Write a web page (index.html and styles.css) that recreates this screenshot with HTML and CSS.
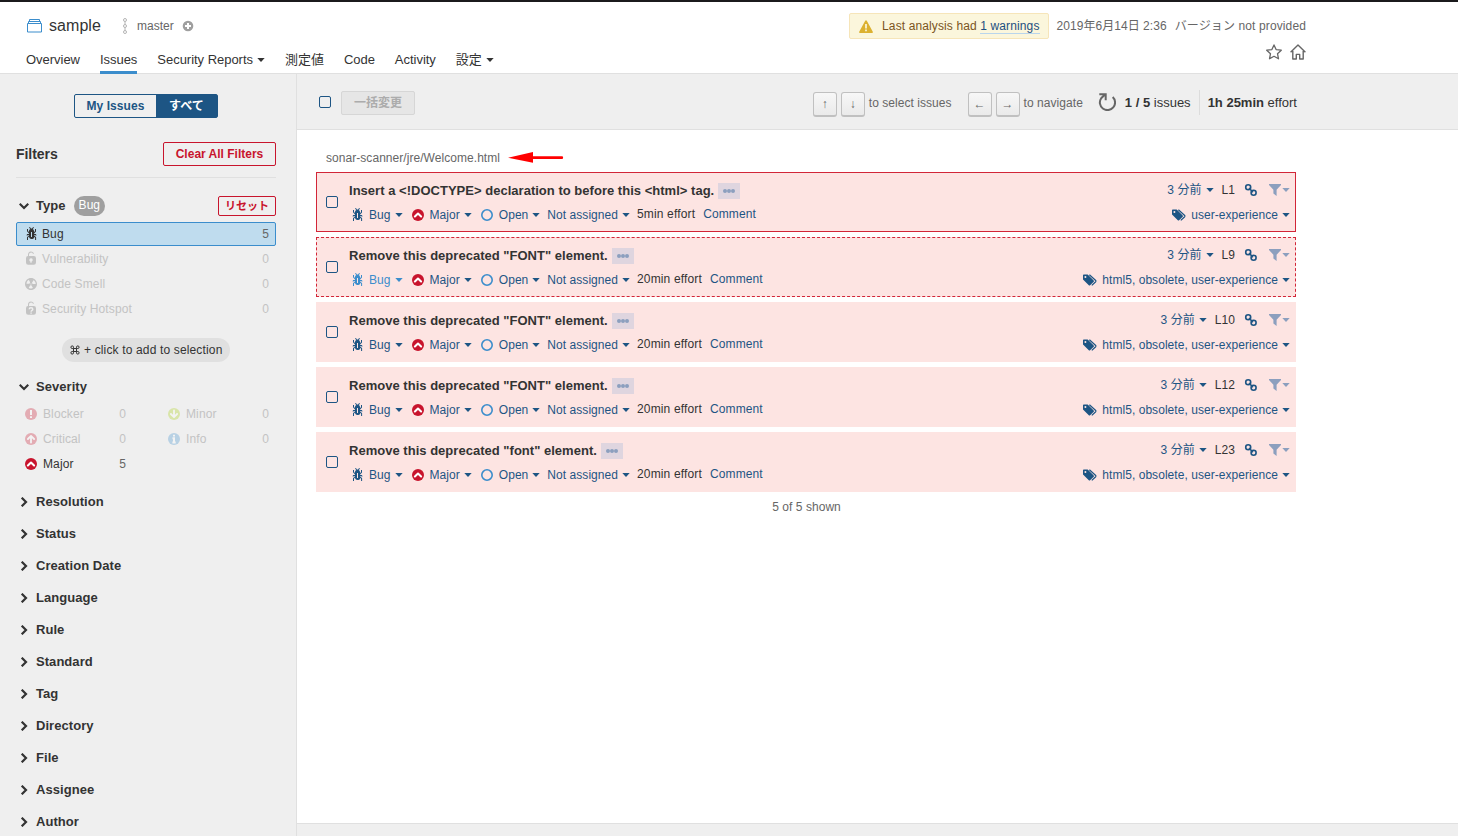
FILE: index.html
```
<!DOCTYPE html>
<html lang="ja">
<head>
	<meta charset="UTF-8">
	<title>sample - Issues</title>
	<link rel="stylesheet" href="styles.css">
</head>
<body>
	<!-- icons -->
	<svg class="sprite">
		<symbol id="bug" viewBox="0 0 16 16"><path fill="currentColor" d="M11 9h1.3l.5.8.8-.5-.8-1.3H11v-.3l2-2.3V3h-1v2l-1 1.2V5c-.1-.8-.7-1.5-1.4-1.9L11 1.8l-.7-.7-1.8 1.6-1.8-1.6-.7.7 1.5 1.3C6.7 3.5 6.1 4.2 6 5v1.1L5 5V3H4v2.3l2 2.3V8H4.2l-.7 1.2.8.5.4-.7H6v.3l-2 1.9V14h1v-2.4l1-1C6 12 7.1 13 8.4 13h.8c.7 0 1.4-.3 1.8-.9.3-.4.3-.9.2-1.4l.9.9V14h1v-2.8l-2-1.9V9zm-2 2H8V6h1v5z"/></symbol>
		<symbol id="lock" viewBox="0 0 16 16"><path fill="currentColor" d="M10.8 5H6V3.9a2.28 2.28 0 0 1 2-2.5 2.22 2.22 0 0 1 1.8 1.2.48.48 0 0 0 .7.2.48.48 0 0 0 .2-.7A3 3 0 0 0 8 .4a3.34 3.34 0 0 0-3 3.5v1.2a2.16 2.16 0 0 0-2 2.1v4.4a2.22 2.22 0 0 0 2.2 2.2h5.6a2.22 2.22 0 0 0 2.2-2.2V7.2A2.22 2.22 0 0 0 10.8 5zm-2.2 5.5v1.2H7.4v-1.2a1.66 1.66 0 0 1-1.1-1.6A1.75 1.75 0 0 1 8 7.2a1.71 1.71 0 0 1 .6 3.3z"/></symbol>
		<symbol id="hotspot" viewBox="0 0 16 16"><path fill="currentColor" d="M10.8 5H6V3.9a2.28 2.28 0 0 1 2-2.5 2.22 2.22 0 0 1 1.8 1.2.48.48 0 0 0 .7.2.48.48 0 0 0 .2-.7A3 3 0 0 0 8 .4a3.34 3.34 0 0 0-3 3.5v1.2a2.16 2.16 0 0 0-2 2.1v4.4a2.22 2.22 0 0 0 2.2 2.2h5.6a2.22 2.22 0 0 0 2.2-2.2V7.2A2.22 2.22 0 0 0 10.8 5z"/><path fill="none" stroke="#efefef" stroke-width="1.4" d="M6.2 8.2c0-2 3.6-2 3.6 0 0 1.2-1.7 1.1-1.7 2.5M8.1 11.5v1.3"/></symbol>
		<symbol id="smell" viewBox="0 0 16 16"><path fill="currentColor" d="M8 2C4.7 2 2 4.7 2 8s2.7 6 6 6 6-2.7 6-6-2.7-6-6-6zm-.5 5.5h.9v.9h-.9v-.9zm-3.8.2c-.1 0-.2-.1-.2-.2 0-.4.1-1.2.6-2S5.3 4.2 5.6 4c.2 0 .3 0 .3.1l1.3 2.3c0 .1 0 .2-.1.2-.1.2-.2.3-.3.5-.1.2-.2.4-.2.5 0 .1-.1.2-.2.2l-2.7-.1zM9.9 12c-.3.2-1.1.5-2 .5-.9 0-1.7-.3-2-.5-.1 0-.1-.2-.1-.3l1.3-2.3c0-.1.1-.1.2-.1.2.1.3.1.5.1s.4 0 .5-.1c.1 0 .2 0 .2.1l1.3 2.3c.2.2.2.3.1.3zm2.5-4.1L9.7 8c-.1 0-.2-.1-.2-.2 0-.2-.1-.4-.2-.5 0-.1-.2-.3-.3-.4-.1 0-.1-.1 0-.2l1.3-2.3c.1-.1.2-.1.3-.1.3.2 1 .7 1.5 1.5s.6 1.6.6 2c0 0-.1.1-.3.1z"/></symbol>
		<symbol id="major" viewBox="0 0 16 16"><circle cx="8" cy="8" r="6" fill="#c8142d"/><path fill="none" stroke="#fff" stroke-width="2.1" stroke-linecap="round" stroke-linejoin="round" d="M4.9 9.5L8 6.6l3.1 2.9"/></symbol>
		<symbol id="blocker" viewBox="0 0 16 16"><circle cx="8" cy="8" r="6" fill="#c8142d"/><path fill="none" stroke="#fff" stroke-width="2" d="M8 4v5M8 10.2v1.9"/></symbol>
		<symbol id="critical" viewBox="0 0 16 16"><circle cx="8" cy="8" r="6" fill="#c8142d"/><path fill="none" stroke="#fff" stroke-width="1.8" stroke-linecap="round" stroke-linejoin="round" d="M4.9 8L8 4.9 11.1 8M8 5.5v6"/></symbol>
		<symbol id="minor" viewBox="0 0 16 16"><circle cx="8" cy="8" r="6" fill="#a8d00c"/><path fill="none" stroke="#fff" stroke-width="1.8" stroke-linecap="round" stroke-linejoin="round" d="M4.9 8L8 11.1 11.1 8M8 10.5v-6"/></symbol>
		<symbol id="info" viewBox="0 0 16 16"><circle cx="8" cy="8" r="6" fill="#3b8dcc"/><path fill="none" stroke="#fff" stroke-width="2" d="M8 3.8v1.8M6.5 7.2H8v4.3M6.4 11.5h3.3"/></symbol>
		<symbol id="open" viewBox="0 0 16 16"><circle cx="8" cy="8" r="5.2" fill="none" stroke="#3b8dcc" stroke-width="1.6"/></symbol>
		<symbol id="caret" viewBox="0 0 8 4"><path fill="currentColor" d="M.3 0h7.4L4 4z"/></symbol>
		<symbol id="down" viewBox="0 0 10 10"><path fill="none" stroke="#333" stroke-width="2.2" d="M.7 2.7L5 7l4.3-4.3"/></symbol>
		<symbol id="right" viewBox="0 0 10 10"><path fill="none" stroke="#333" stroke-width="2.2" d="M2.7.7L7 5 2.7 9.3"/></symbol>
		<symbol id="link" viewBox="0 0 16 16"><g fill="none" stroke="currentColor" stroke-width="1.6"><circle cx="5.2" cy="5.2" r="2.5"/><circle cx="10.6" cy="10.8" r="2.5"/><path d="M6 6l4 4.200"/></g></symbol>
		<symbol id="filter" viewBox="0 0 12 12"><path fill="currentColor" d="M0 0h12v1L7.6 5.8V12L4.4 9.6V5.8L0 1z"/></symbol>
		<symbol id="tags" viewBox="0 0 16 12"><path fill="currentColor" fill-rule="evenodd" d="M1 1.5v4L6.8 11.3c.4.4.9.4 1.3 0l3.6-3.6c.4-.4.4-.9 0-1.3L6.2.9C5.900.6 5.5.5 5.1.5H2c-.6 0-1 .4-1 1zM3.4 2a1 1 0 1 1 0 2 1 1 0 0 1 0-2z"/><path fill="none" stroke="currentColor" stroke-width="1.2" d="M7.4.8l6.3 5.7c.4.4.4.8 0 1.2l-3.9 3.7"/></symbol>
	</svg>

	<header class="header">
		<div class="header-left">
			<div class="project">
				<svg class="project-icon" viewBox="0 0 15 14"><path fill="none" stroke="#3b8dcc" d="M.5 4.5h14v8.500H.5zM1.500 4.500v-2h12v2M2.500 2.500v-2h10v2"/></svg>
				<span class="project-name">sample</span>
				<svg class="branch-icon" viewBox="0 0 6 16"><g fill="none" stroke="#b4b4b4"><circle cx="3" cy="2" r="1.5"/><circle cx="3" cy="8" r="1.5"/><circle cx="3" cy="14" r="1.5"/><path d="M3 3.5v3M3 9.5v3"/></g></svg>
				<span class="branch">master</span>
				<svg class="plus-icon" viewBox="0 0 12 12"><circle cx="6" cy="6" r="5.3" fill="#9f9f9f"/><path stroke="#fff" stroke-width="2" d="M3 6h6M6 3v6"/></svg>
			</div>
			<nav class="nav">
				<a>Overview</a>
				<a class="active">Issues</a>
				<a>Security Reports<svg class="caret"><use href="#caret"/></svg></a>
				<a>測定値</a>
				<a>Code</a>
				<a>Activity</a>
				<a>設定<svg class="caret"><use href="#caret"/></svg></a>
			</nav>
		</div>
		<div class="header-right">
			<div class="analysis">
				<div class="warning">
					<svg class="warning-icon" viewBox="0 0 14 13"><path fill="#dcb130" d="M7 .2c.3 0 .6.2.8.5l6 11c.3.6 0 1.2-.8 1.2H1c-.8 0-1.1-.6-.8-1.2l6-11c.2-.3.5-.5.8-.5z"/><path stroke="#fbf6dc" stroke-width="1.7" d="M7 4v4.5M7 9.5v1.8"/></svg>
					<span>Last analysis had <a>1 warnings</a></span>
				</div>
				<span class="date">2019年6月14日 2:36</span>
				<span>バージョン not provided</span>
			</div>
			<div class="header-actions">
				<svg viewBox="0 0 16 16"><path fill="none" stroke="#666" stroke-width="1.3" stroke-linejoin="round" d="M8 .9l2.1 4.7 5.2.6-3.8 3.5 1 5.1L8 12.3l-4.5 2.5 1-5.1L.7 6.2l5.2-.6z"/></svg>
				<svg viewBox="0 0 16 16"><path fill="none" stroke="#666" stroke-width="1.4" stroke-linejoin="round" d="M.6 8.3L8 1.1l7.4 7.2M2.8 7v8h3.500v-4.600h3.400V15h3.500V7"/></svg>
			</div>
		</div>
	</header>

	<div class="page">
		<aside class="side">
			<div class="toggle"><span>My Issues</span><span class="on">すべて</span></div>
			<div class="filters-head">
				<h2>Filters</h2>
				<button class="clear">Clear All Filters</button>
			</div>

			<div class="facet-head type-head">
				<svg class="chevron"><use href="#down"/></svg>Type<span class="badge">Bug</span>
				<button class="reset">リセット</button>
			</div>
			<div class="facet-item selected"><svg class="icon"><use href="#bug"/></svg>Bug<span class="count">5</span></div>
			<div class="facet-item off"><svg class="icon"><use href="#lock"/></svg>Vulnerability<span class="count">0</span></div>
			<div class="facet-item off"><svg class="icon"><use href="#smell"/></svg>Code Smell<span class="count">0</span></div>
			<div class="facet-item off"><svg class="icon"><use href="#hotspot"/></svg>Security Hotspot<span class="count">0</span></div>
			<div class="hint"><svg class="cmd" viewBox="0 0 10 10"><path fill="none" stroke="#333" d="M3.5 3.5h3v3h-3zM3.5 3.5H2.2A1.3 1.3 0 1 1 3.5 2.2zM6.5 3.5V2.2A1.3 1.3 0 1 1 7.8 3.5zM6.5 6.5h1.3A1.3 1.3 0 1 1 6.5 7.8zM3.5 6.5v1.3A1.3 1.3 0 1 1 2.2 6.5z"/></svg>+ click to add to selection</div>

			<div class="facet-head severity-head"><svg class="chevron"><use href="#down"/></svg>Severity</div>
			<div class="severity">
				<div class="facet-item off"><svg class="icon"><use href="#blocker"/></svg>Blocker<span class="count">0</span></div>
				<div class="facet-item off"><svg class="icon"><use href="#minor"/></svg>Minor<span class="count">0</span></div>
				<div class="facet-item off"><svg class="icon"><use href="#critical"/></svg>Critical<span class="count">0</span></div>
				<div class="facet-item off"><svg class="icon"><use href="#info"/></svg>Info<span class="count">0</span></div>
				<div class="facet-item"><svg class="icon"><use href="#major"/></svg>Major<span class="count">5</span></div>
			</div>

			<div class="facet-head"><svg class="chevron"><use href="#right"/></svg>Resolution</div>
			<div class="facet-head"><svg class="chevron"><use href="#right"/></svg>Status</div>
			<div class="facet-head"><svg class="chevron"><use href="#right"/></svg>Creation Date</div>
			<div class="facet-head"><svg class="chevron"><use href="#right"/></svg>Language</div>
			<div class="facet-head"><svg class="chevron"><use href="#right"/></svg>Rule</div>
			<div class="facet-head"><svg class="chevron"><use href="#right"/></svg>Standard</div>
			<div class="facet-head"><svg class="chevron"><use href="#right"/></svg>Tag</div>
			<div class="facet-head"><svg class="chevron"><use href="#right"/></svg>Directory</div>
			<div class="facet-head"><svg class="chevron"><use href="#right"/></svg>File</div>
			<div class="facet-head"><svg class="chevron"><use href="#right"/></svg>Assignee</div>
			<div class="facet-head"><svg class="chevron"><use href="#right"/></svg>Author</div>
		</aside>

		<main class="main">
			<div class="toolbar">
				<div class="toolbar-inner">
					<i class="checkbox"></i>
					<button class="bulk" disabled>一括変更</button>
					<div class="keys">
						<kbd>↑</kbd><kbd>↓</kbd><span>to select issues</span>
					</div>
					<div class="keys navigate">
						<kbd>←</kbd><kbd>→</kbd><span>to navigate</span>
					</div>
					<svg class="reload" viewBox="0 0 18 18"><path fill="none" stroke="#666" stroke-width="2" d="M14.700 4A7.600 7.600 0 1 1 3.200 5.200L7 1.600M1.300 1.300h6.400v6"/></svg>
					<span class="total"><b>1 / 5</b> issues</span>
					<span class="effort-total"><b>1h 25min</b> effort</span>
				</div>
			</div>

			<div class="list">
				<div class="file">sonar-scanner/jre/Welcome.html<svg class="arrow" viewBox="0 0 56 12"><path fill="#f00" d="M0 5.7L25 0v4.3h29c1.5 0 1.5 2.8 0 2.8H25v3.7z"/></svg></div>

				<div class="issue current">
					<i class="checkbox"></i>
					<div class="body">
						<div class="row">
							<b>Insert a &lt;!DOCTYPE&gt; declaration to before this &lt;html&gt; tag.</b><span class="more"><i></i><i></i><i></i></span>
							<div class="info"><a>3 分前<svg class="caret"><use href="#caret"/></svg></a><span class="line">L1</span><svg class="link"><use href="#link"/></svg><span class="filter"><svg><use href="#filter"/></svg><svg class="caret"><use href="#caret"/></svg></span></div>
						</div>
						<div class="row meta">
							<a><svg class="icon"><use href="#bug"/></svg>Bug<svg class="caret"><use href="#caret"/></svg></a>
							<a><svg class="icon"><use href="#major"/></svg>Major<svg class="caret"><use href="#caret"/></svg></a>
							<a><svg class="icon"><use href="#open"/></svg>Open<svg class="caret"><use href="#caret"/></svg></a>
							<a>Not assigned<svg class="caret"><use href="#caret"/></svg></a>
							<span class="effort">5min effort</span>
							<a class="comment">Comment</a>
							<a class="tags"><svg><use href="#tags"/></svg>user-experience<svg class="caret"><use href="#caret"/></svg></a>
						</div>
					</div>
				</div>

				<div class="issue next">
					<i class="checkbox"></i>
					<div class="body">
						<div class="row">
							<b>Remove this deprecated "FONT" element.</b><span class="more"><i></i><i></i><i></i></span>
							<div class="info"><a>3 分前<svg class="caret"><use href="#caret"/></svg></a><span class="line">L9</span><svg class="link"><use href="#link"/></svg><span class="filter"><svg><use href="#filter"/></svg><svg class="caret"><use href="#caret"/></svg></span></div>
						</div>
						<div class="row meta">
							<a class="hover"><svg class="icon"><use href="#bug"/></svg>Bug<svg class="caret"><use href="#caret"/></svg></a>
							<a><svg class="icon"><use href="#major"/></svg>Major<svg class="caret"><use href="#caret"/></svg></a>
							<a><svg class="icon"><use href="#open"/></svg>Open<svg class="caret"><use href="#caret"/></svg></a>
							<a>Not assigned<svg class="caret"><use href="#caret"/></svg></a>
							<span class="effort">20min effort</span>
							<a class="comment">Comment</a>
							<a class="tags"><svg><use href="#tags"/></svg>html5, obsolete, user-experience<svg class="caret"><use href="#caret"/></svg></a>
						</div>
					</div>
				</div>

				<div class="issue">
					<i class="checkbox"></i>
					<div class="body">
						<div class="row">
							<b>Remove this deprecated "FONT" element.</b><span class="more"><i></i><i></i><i></i></span>
							<div class="info"><a>3 分前<svg class="caret"><use href="#caret"/></svg></a><span class="line">L10</span><svg class="link"><use href="#link"/></svg><span class="filter"><svg><use href="#filter"/></svg><svg class="caret"><use href="#caret"/></svg></span></div>
						</div>
						<div class="row meta">
							<a><svg class="icon"><use href="#bug"/></svg>Bug<svg class="caret"><use href="#caret"/></svg></a>
							<a><svg class="icon"><use href="#major"/></svg>Major<svg class="caret"><use href="#caret"/></svg></a>
							<a><svg class="icon"><use href="#open"/></svg>Open<svg class="caret"><use href="#caret"/></svg></a>
							<a>Not assigned<svg class="caret"><use href="#caret"/></svg></a>
							<span class="effort">20min effort</span>
							<a class="comment">Comment</a>
							<a class="tags"><svg><use href="#tags"/></svg>html5, obsolete, user-experience<svg class="caret"><use href="#caret"/></svg></a>
						</div>
					</div>
				</div>

				<div class="issue">
					<i class="checkbox"></i>
					<div class="body">
						<div class="row">
							<b>Remove this deprecated "FONT" element.</b><span class="more"><i></i><i></i><i></i></span>
							<div class="info"><a>3 分前<svg class="caret"><use href="#caret"/></svg></a><span class="line">L12</span><svg class="link"><use href="#link"/></svg><span class="filter"><svg><use href="#filter"/></svg><svg class="caret"><use href="#caret"/></svg></span></div>
						</div>
						<div class="row meta">
							<a><svg class="icon"><use href="#bug"/></svg>Bug<svg class="caret"><use href="#caret"/></svg></a>
							<a><svg class="icon"><use href="#major"/></svg>Major<svg class="caret"><use href="#caret"/></svg></a>
							<a><svg class="icon"><use href="#open"/></svg>Open<svg class="caret"><use href="#caret"/></svg></a>
							<a>Not assigned<svg class="caret"><use href="#caret"/></svg></a>
							<span class="effort">20min effort</span>
							<a class="comment">Comment</a>
							<a class="tags"><svg><use href="#tags"/></svg>html5, obsolete, user-experience<svg class="caret"><use href="#caret"/></svg></a>
						</div>
					</div>
				</div>

				<div class="issue">
					<i class="checkbox"></i>
					<div class="body">
						<div class="row">
							<b>Remove this deprecated "font" element.</b><span class="more"><i></i><i></i><i></i></span>
							<div class="info"><a>3 分前<svg class="caret"><use href="#caret"/></svg></a><span class="line">L23</span><svg class="link"><use href="#link"/></svg><span class="filter"><svg><use href="#filter"/></svg><svg class="caret"><use href="#caret"/></svg></span></div>
						</div>
						<div class="row meta">
							<a><svg class="icon"><use href="#bug"/></svg>Bug<svg class="caret"><use href="#caret"/></svg></a>
							<a><svg class="icon"><use href="#major"/></svg>Major<svg class="caret"><use href="#caret"/></svg></a>
							<a><svg class="icon"><use href="#open"/></svg>Open<svg class="caret"><use href="#caret"/></svg></a>
							<a>Not assigned<svg class="caret"><use href="#caret"/></svg></a>
							<span class="effort">20min effort</span>
							<a class="comment">Comment</a>
							<a class="tags"><svg><use href="#tags"/></svg>html5, obsolete, user-experience<svg class="caret"><use href="#caret"/></svg></a>
						</div>
					</div>
				</div>

				<div class="shown">5 of 5 shown</div>
			</div>
			<div class="footer"></div>
		</main>
	</div>
</body>
</html>
```
FILE: styles.css
```
* {
	box-sizing: border-box;
	margin: 0;
	padding: 0;
}

body {
	height: 836px;
	display: flex;
	flex-direction: column;
	overflow: hidden;
	background: #fff;
	color: #333;
	font: 12px/16px "Liberation Sans", "Noto Sans CJK JP", sans-serif;
	letter-spacing: .05px;
	white-space: nowrap;
}

svg {
	flex: none;
}

button {
	font: inherit;
}

.sprite {
	position: absolute;
	width: 0;
	height: 0;
}

.icon {
	width: 16px;
	height: 16px;
}

.caret {
	width: 8px;
	height: 4px;
	margin-left: 4px;
}

.checkbox {
	flex: none;
	width: 12px;
	height: 12px;
	border: 1px solid #1d5584;
	border-radius: 2px;
}

/* header */
.header {
	flex: none;
	height: 74px;
	border-top: 2px solid #1b1a1c;
	border-bottom: 1px solid #e0e0e0;
	display: flex;
	justify-content: space-between;
	padding: 0 152px 0 26px;
}

.project {
	display: flex;
	align-items: center;
	height: 48px;
}

.project-icon {
	width: 15px;
	height: 14px;
	margin: 0 7px 1px 1px;
}

.project-name {
	font-size: 16px;
}

.branch-icon {
	width: 6px;
	height: 16px;
	margin: 0 9px 0 21px;
}

.branch {
	color: #666;
	margin-right: 8px;
}

.plus-icon {
	width: 12px;
	height: 12px;
}

.nav {
	display: flex;
	gap: 20px;
	font-size: 13px;
	letter-spacing: -.03px;
}

.nav a {
	height: 24px;
	line-height: 20px;
	display: flex;
}

.nav .caret {
	margin-top: 8px;
}

.nav .active {
	border-bottom: 3px solid #3b8dcc;
}

.header-right {
	display: flex;
	flex-direction: column;
	align-items: flex-end;
	color: #666;
}

.analysis {
	display: flex;
	align-items: center;
	margin-top: 11px;
	letter-spacing: .12px;
}

.warning {
	display: flex;
	align-items: center;
	height: 26px;
	padding: 0 8px 0 9px;
	border: 1px solid #f6e5b9;
	border-radius: 2px;
	background: #fbf6dc;
	color: #7a5422;
}

.warning-icon {
	width: 14px;
	height: 13px;
	margin-right: 9px;
}

.warning a {
	color: #1d4f80;
	border-bottom: 1px solid #b9d5ec;
}

.date {
	margin: 0 8px;
	letter-spacing: .05px;
}

.header-actions {
	display: flex;
	gap: 8px;
	margin-top: 5px;
}

.header-actions svg {
	width: 16px;
	height: 16px;
}

/* sidebar */
.page {
	flex: 1;
	min-height: 0;
	display: flex;
}

.side {
	flex: none;
	width: 297px;
	padding: 20px 20px 0 16px;
	border-right: 1px solid #e0e0e0;
	background: #efefef;
	overflow: hidden;
}

.toggle {
	display: flex;
	width: 144px;
	height: 24px;
	margin-left: 58px;
	border: 1px solid #1d5584;
	border-radius: 2px;
	color: #1d5584;
	font-weight: bold;
	line-height: 22px;
	text-align: center;
}

.toggle span {
	width: 81px;
}

.toggle .on {
	flex: 1;
	background: #1d5584;
	color: #fff;
}

.filters-head {
	display: flex;
	align-items: center;
	justify-content: space-between;
	height: 48px;
	margin: 12px 0 12px;
	border-bottom: 1px solid #e0e0e0;
}

.filters-head h2 {
	font-size: 14px;
	letter-spacing: -.05px;
}

.clear, .reset {
	height: 24px;
	padding: 0 12px;
	border: 1px solid #c8142d;
	border-radius: 2px;
	background: transparent;
	color: #c8142d;
	font-weight: bold;
	line-height: 20px;
}

.clear {
	width: 113px;
	padding: 0;
	letter-spacing: 0;
}

.reset {
	height: 20px;
	padding: 0 6px;
	margin-left: auto;
	font-size: 11px;
	line-height: 16px;
}

.facet-head {
	display: flex;
	align-items: center;
	height: 32px;
	font-size: 13px;
	font-weight: bold;
}

.severity-head {
	padding-top: 1px;
}

.chevron {
	width: 10px;
	height: 10px;
	margin: 0 7px 0 3px;
}

.badge {
	height: 20px;
	margin-left: 8px;
	padding: 0 5px;
	border-radius: 10px;
	background: #9f9f9f;
	color: #fff;
	font-size: 12px;
	font-weight: normal;
	line-height: 18px;
}

.facet-item {
	display: flex;
	align-items: center;
	height: 24px;
	margin-bottom: 1px;
	padding: 0 7px;
	letter-spacing: .12px;
}

.facet-item .icon {
	margin-right: 3px;
}

.facet-item .count {
	margin-left: auto;
	color: #666;
	letter-spacing: 0;
}

.facet-item.selected {
	padding: 0 6px;
	border: 1px solid #3b8dcc;
	border-radius: 2px;
	background: #bfdcee;
}

.facet-item.off, .facet-item.off .count {
	color: #c3c3c3;
}

.hint {
	display: flex;
	align-items: center;
	width: 168px;
	height: 24px;
	margin: 17px 0 8px 46px;
	padding-left: 8px;
	border-radius: 12px;
	background: #e0e0e0;
	letter-spacing: .15px;
}

.cmd {
	width: 10px;
	height: 10px;
	margin-right: 4px;
}

.severity {
	display: grid;
	grid-template-columns: 117px 117px;
	column-gap: 26px;
	margin-bottom: 9px;
}

.severity .icon {
	margin-right: 4px;
}

.severity .off .icon {
	opacity: .3;
}

/* issues */
.main {
	flex: 1;
	display: flex;
	flex-direction: column;
}

.toolbar {
	height: 56px;
	border-bottom: 1px solid #e0e0e0;
	background: #efefef;
}

.toolbar-inner {
	display: flex;
	align-items: center;
	width: 1000px;
	height: 56px;
	padding-left: 22px;
}

.bulk {
	width: 74px;
	height: 24px;
	margin: 2px auto 0 10px;
	border: 1px solid #d6d6d6;
	border-radius: 2px;
	background: #e6e6e6;
	color: #acacac;
	font-weight: bold;
	line-height: 20px;
}

.keys {
	display: flex;
	align-items: center;
	color: #666;
}

.keys span {
	padding-top: 1px;
}

.keys kbd {
	width: 24px;
	height: 25px;
	margin: 4px 4px 0 0;
	border: 1px solid #c0c0c0;
	border-bottom-width: 2px;
	border-radius: 3px;
	background: linear-gradient(#f7f7f7, #eaeaea);
	font: 12px/23px "Liberation Sans", sans-serif;
	text-align: center;
}

.navigate {
	margin: 0 15px 0 16px;
}

.reload {
	width: 18px;
	height: 18px;
	margin-right: 9px;
}

.total, .effort-total {
	padding-top: 1px;
	font-size: 13px;
	letter-spacing: 0;
}

.effort-total {
	margin-left: 8px;
	padding-left: 8px;
	border-left: 1px solid #dcdcdc;
	line-height: 24px;
}

.list {
	flex: 1;
	width: 1000px;
	padding: 19px 0 0 19px;
}

.file {
	display: flex;
	align-items: center;
	height: 18px;
	margin-bottom: 5px;
	padding-left: 10px;
	color: #666;
}

.arrow {
	width: 56px;
	height: 12px;
	margin-left: 8px;
}

.issue {
	display: flex;
	align-items: center;
	width: 980px;
	height: 60px;
	margin-bottom: 5px;
	padding: 0 5px 0 9px;
	border: 1px solid #fde4e2;
	background: #fde4e2;
}

.issue.current {
	border-color: #d22638;
}

.issue.next {
	border: 1px dashed #d22638;
}

.body {
	flex: 1;
	margin-left: 11px;
	padding-top: 2px;
}

.row {
	display: flex;
	align-items: center;
	height: 24px;
}

.row b {
	font-size: 13px;
	letter-spacing: .02px;
}

.row a {
	display: flex;
	align-items: center;
	color: #1d5584;
}

.row .hover {
	color: #3b8dcc;
}

.more {
	display: flex;
	align-items: center;
	justify-content: center;
	width: 22px;
	height: 16px;
	margin-left: 4px;
	background: #dfd5df;
}

.more i {
	width: 4px;
	height: 4px;
	border-radius: 2px;
	background: #8c9fbe;
}

.info {
	display: flex;
	align-items: center;
	margin-left: auto;
	padding-bottom: 2px;
}

.line {
	margin: 0 8px;
}

.link {
	width: 16px;
	height: 16px;
	color: #1d5584;
}

.filter {
	display: flex;
	align-items: center;
	margin-left: 10px;
	color: #8c9fbe;
}

.filter svg {
	width: 12px;
	height: 12px;
}

.filter .caret {
	width: 8px;
	height: 4px;
	margin-left: 1px;
}

.meta a {
	margin-right: 7px;
}

.meta .icon {
	margin-right: 4px;
}

.effort {
	margin-bottom: 2px;
	letter-spacing: .15px;
}

.meta .comment {
	margin: 0 0 2px 8px;
	letter-spacing: .12px;
}

.meta .tags {
	margin: 0 0 0 auto;
}

.tags svg:first-child {
	width: 16px;
	height: 12px;
	margin-right: 4px;
}

.shown {
	margin-top: 7px;
	color: #666;
	text-align: center;
}

.footer {
	height: 13px;
	border-top: 1px solid #e0e0e0;
	background: #efefef;
}
```
